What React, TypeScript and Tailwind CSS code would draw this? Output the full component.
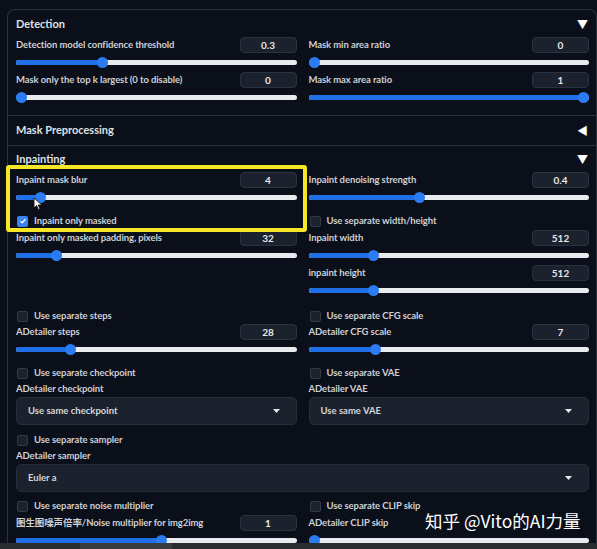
import type { ReactNode } from "react";

const font = { fontFamily: "Lato, 'Noto Sans CJK SC', sans-serif" };

function NumberBox({ value }: { value: string }) {
  return (
    <div className="flex h-[16px] w-[57px] items-center justify-center rounded-[4px] border border-[#2a3140] bg-[#1c222d] text-[10px] font-bold text-[#e5e7eb]">
      {value}
    </div>
  );
}

function Slider({ pct }: { pct: number }) {
  return (
    <div className="flex h-[19px] items-center">
      <div className="relative h-[5px] w-full rounded-full bg-[#e8eaed]">
        <div
          className="absolute top-0 left-0 h-full rounded-full bg-[#1f6fe6]"
          style={{ width: `calc(5px + (100% - 10px) * ${pct})` }}
        />
        <div
          className="absolute top-[-3px] h-[11px] w-[11px] rounded-full bg-[#2b7cf2]"
          style={{ left: `calc((100% - 11px) * ${pct})` }}
        />
      </div>
    </div>
  );
}

function SliderField({
  label,
  value,
  pct,
}: {
  label: string;
  value?: string;
  pct: number;
}) {
  return (
    <div>
      <div className="flex h-[16px] items-center justify-between">
        <span className="text-[9.5px] font-bold tracking-[-0.01em] text-[#cdd0d5]">
          {label}
        </span>
        {value !== undefined && <NumberBox value={value} />}
      </div>
      <Slider pct={pct} />
    </div>
  );
}

function Check({ label, checked }: { label: string; checked?: boolean }) {
  return (
    <div className="flex h-[14px] items-center gap-[6px] pl-px">
      {checked ? (
        <span className="flex h-[11px] w-[11px] items-center justify-center rounded-[2px] bg-[#3b82f6]">
          <svg width="8" height="8" viewBox="0 0 10 10">
            <path d="M2 5.2l2 2 4-4.4" stroke="#fff" strokeWidth="1.6" fill="none" />
          </svg>
        </span>
      ) : (
        <span className="h-[11px] w-[11px] rounded-[2px] border border-[#323a48] bg-[#1c222d]" />
      )}
      <span className="text-[9.5px] font-bold tracking-[-0.01em] text-[#cdd0d5]">
        {label}
      </span>
    </div>
  );
}

function Dropdown({ label, value }: { label: string; value: string }) {
  return (
    <div>
      <div className="flex h-[15px] items-center text-[9.5px] font-bold tracking-[-0.01em] text-[#cdd0d5]">
        {label}
      </div>
      <div className="flex h-[28px] items-center justify-between rounded-[5px] border border-[#262d3a] bg-[#1c222d] pr-[16px] pl-[11px]">
        <span className="text-[9.5px] font-bold text-[#d4d7dc]">{value}</span>
        <svg width="7" height="4" viewBox="0 0 7 4">
          <path d="M0 0h7L3.5 4z" fill="#e5e7eb" />
        </svg>
      </div>
    </div>
  );
}

function Header({ title, open, children }: { title: string; open: boolean; children?: ReactNode }) {
  return (
    <div className="flex h-[14px] items-center justify-between">
      <span className="text-[11px] font-bold text-[#dfe2e6]">{title}</span>
      <span className="pr-[1px] text-[11px] leading-none text-white">{open ? "▼" : "◀"}</span>
      {children}
    </div>
  );
}

export default function App() {
  return (
    <div
      className="relative h-[549px] w-[597px] overflow-hidden bg-[#0b0f19]"
      style={font}
    >
      <div className="mt-[9px] ml-[7px] w-[590px] rounded-t-[8px] border-t border-r border-l border-[#2b313d]">
        {/* Detection */}
        <div className="pt-[7px] pr-[7px] pb-[8px] pl-[8px]">
          <Header title="Detection" open />
          <div className="mt-[6px] grid grid-cols-2 gap-x-[12px]">
            <div>
              <SliderField label="Detection model confidence threshold" value="0.3" pct={0.3} />
              <SliderField label="Mask only the top k largest (0 to disable)" value="0" pct={0} />
            </div>
            <div>
              <SliderField label="Mask min area ratio" value="0" pct={0} />
              <SliderField label="Mask max area ratio" value="1" pct={1} />
            </div>
          </div>
        </div>

        {/* Mask Preprocessing */}
        <div className="flex h-[30px] flex-col justify-center border-t border-[#2b313d] pr-[7px] pl-[8px]">
          <Header title="Mask Preprocessing" open={false} />
        </div>

        {/* Inpainting */}
        <div className="border-t border-[#2b313d] pt-[6px] pr-[7px] pl-[8px]">
          <Header title="Inpainting" open />
          <div className="mt-[6px] grid grid-cols-2 gap-x-[12px]">
            <div>
              <SliderField label="Inpaint mask blur" value="4" pct={0.07} />
              <div className="mt-[7px]">
                <Check label="Inpaint only masked" checked />
              </div>
              <div className="mt-[2px]">
                <SliderField label="Inpaint only masked padding, pixels" value="32" pct={0.13} />
              </div>
            </div>
            <div>
              <SliderField label="Inpaint denoising strength" value="0.4" pct={0.39} />
              <div className="mt-[7px]">
                <Check label="Use separate width/height" />
              </div>
              <div className="mt-[2px]">
                <SliderField label="Inpaint width" value="512" pct={0.22} />
              </div>
              <SliderField label="inpaint height" value="512" pct={0.22} />
            </div>
          </div>

          <div className="mt-[9px] grid grid-cols-2 gap-x-[12px]">
            <div>
              <Check label="Use separate steps" />
              <div className="mt-[1px]">
                <SliderField label="ADetailer steps" value="28" pct={0.18} />
              </div>
              <div className="mt-[7px]">
                <Check label="Use separate checkpoint" />
              </div>
              <div className="mt-[2px]">
                <Dropdown label="ADetailer checkpoint" value="Use same checkpoint" />
              </div>
            </div>
            <div>
              <Check label="Use separate CFG scale" />
              <div className="mt-[1px]">
                <SliderField label="ADetailer CFG scale" value="7" pct={0.23} />
              </div>
              <div className="mt-[7px]">
                <Check label="Use separate VAE" />
              </div>
              <div className="mt-[2px]">
                <Dropdown label="ADetailer VAE" value="Use same VAE" />
              </div>
            </div>
          </div>

          <div className="mt-[8px]">
            <Check label="Use separate sampler" />
            <div className="mt-[2px]">
              <Dropdown label="ADetailer sampler" value="Euler a" />
            </div>
          </div>

          <div className="mt-[7px] grid grid-cols-2 gap-x-[12px]">
            <div>
              <Check label="Use separate noise multiplier" />
              <div className="mt-[2px]">
                <SliderField label="图生图噪声倍率/Noise multiplier for img2img" value="1" pct={0.52} />
              </div>
            </div>
            <div>
              <Check label="Use separate CLIP skip" />
              <div className="mt-[2px]">
                <SliderField label="ADetailer CLIP skip" pct={0} />
              </div>
            </div>
          </div>
        </div>
      </div>

      {/* highlight box */}
      <div className="absolute top-[165px] left-[6px] h-[67px] w-[301px] rounded-[3px] border-[4px] border-[#f5e626]" />

      {/* cursor */}
      <svg className="absolute top-[197px] left-[33px]" width="10" height="14" viewBox="0 0 10 14">
        <path d="M1 1v10l2.6-2.4 1.8 4 1.6-.7-1.8-3.9H9z" fill="#fff" stroke="#111" strokeWidth="0.9" />
      </svg>

      {/* watermark */}
      <div
        className="absolute top-[512px] left-[425px] text-[17.5px] leading-none text-white"
        style={{ fontFamily: "'Noto Sans CJK SC', sans-serif" }}
      >
        知乎 @Vito的AI力量
      </div>

      {/* bottom strip */}
      <div className="absolute bottom-0 left-0 flex h-[6px] w-full bg-[#2a2b2e]">
        <div className="ml-[80px] h-full w-[92px] bg-[#3a3b3e]" />
      </div>
    </div>
  );
}
